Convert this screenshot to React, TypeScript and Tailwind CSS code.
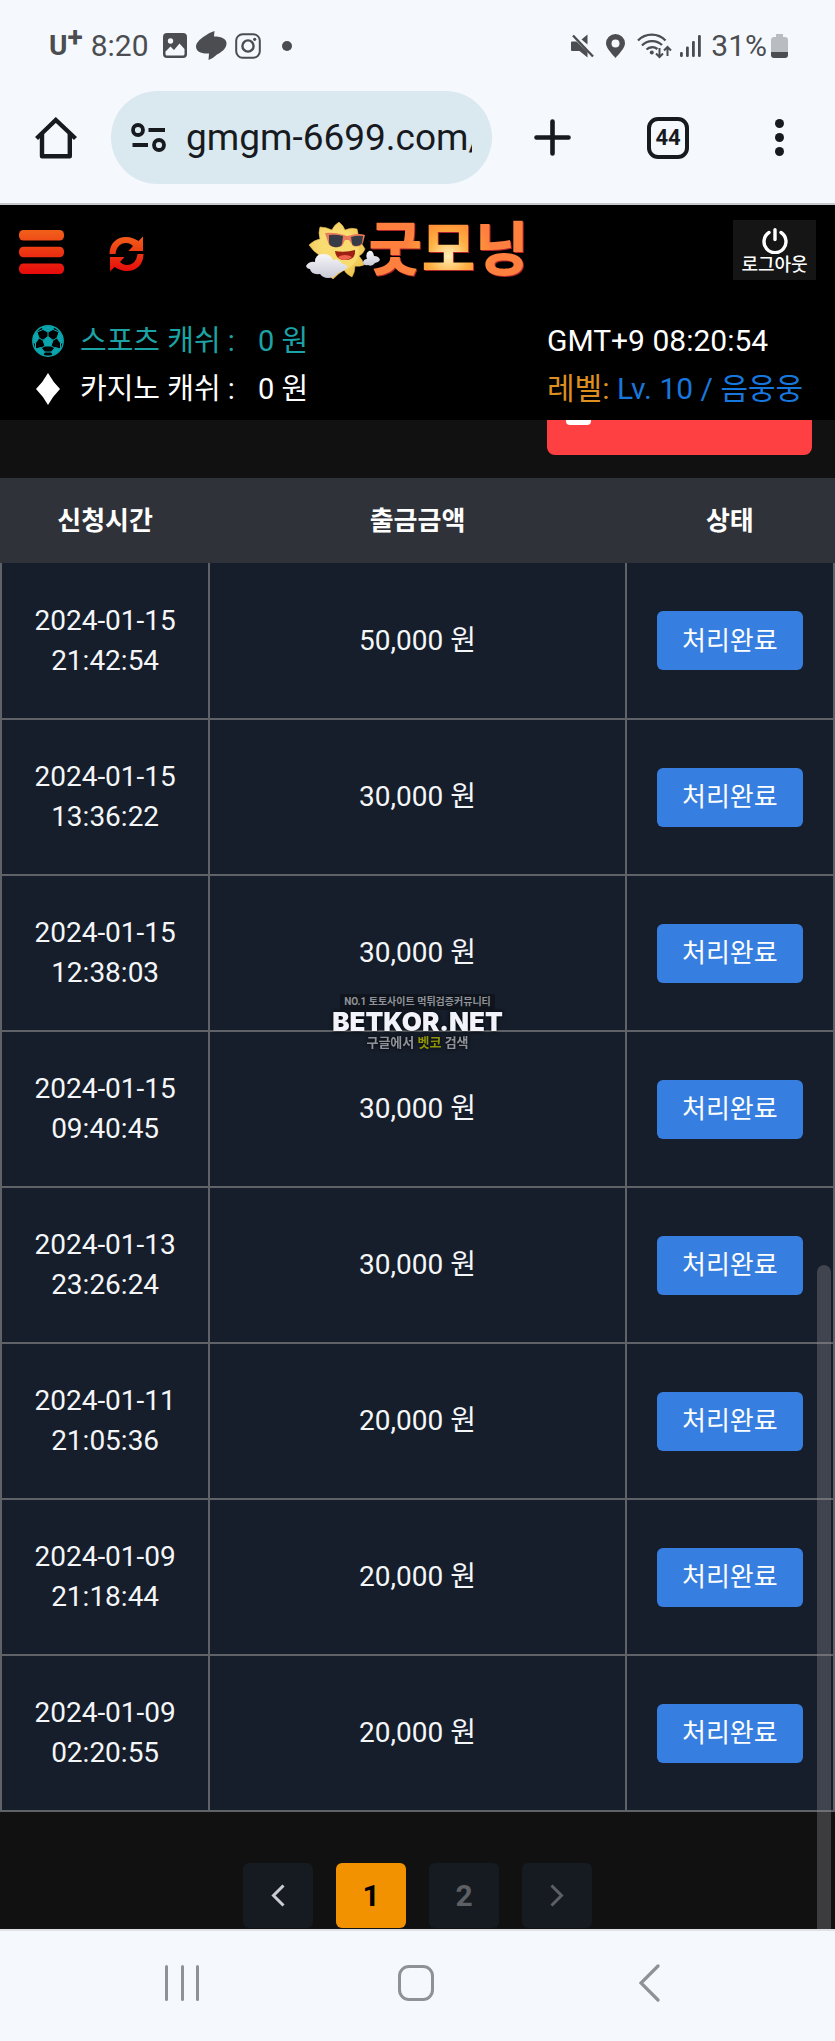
/**
 * @file App.tsx
 * @description
 * Mobile withdrawal history screen: phone status bar, browser toolbar,
 * site header with balances, the history table and its pagination.
 */

import React from 'react';

interface Withdrawal {
  date: string;
  time: string;
  amount: string;
}

const WITHDRAWALS: Withdrawal[] = [
  { date: '2024-01-15', time: '21:42:54', amount: '50,000' },
  { date: '2024-01-15', time: '13:36:22', amount: '30,000' },
  { date: '2024-01-15', time: '12:38:03', amount: '30,000' },
  { date: '2024-01-15', time: '09:40:45', amount: '30,000' },
  { date: '2024-01-13', time: '23:26:24', amount: '30,000' },
  { date: '2024-01-11', time: '21:05:36', amount: '20,000' },
  { date: '2024-01-09', time: '21:18:44', amount: '20,000' },
  { date: '2024-01-09', time: '02:20:55', amount: '20,000' },
];

const StatusBar: React.FC = () => (
  <div className="flex h-[91px] items-center justify-between pl-[49px] pr-[47px] text-[30px] leading-8 text-[#4b4d50]">
    <div className="flex items-center">
      <span className="flex items-center text-[28px] font-bold">
        U<span className="-mt-4">+</span>
      </span>
      <span className="ml-2">8:20</span>
      <svg className="ml-[14px] h-[25px] w-[24px]" viewBox="0 0 24 25" fill="none">
        <rect width="24" height="25" rx="4" fill="currentColor" />
        <circle cx="7.5" cy="8" r="2.7" fill="#f5f9fe" />
        <path d="M2.5 18.5 L7.5 13.5 L11 17 L16.5 10.5 L21.5 16 V21 Q21.5 22.5 20 22.5 H4 Q2.5 22.5 2.5 21 Z" fill="#f5f9fe" />
      </svg>
      <svg className="ml-[9px] h-[29px] w-[31px]" viewBox="0 0 31 29" fill="currentColor">
        <path d="M18.5 0 L18 5.5 C26 5.5 31 8 30.5 13 C30 18 25 21.5 21 23.5 Q17 27.5 12.5 29 L13 22.5 C5 23 0 20.5 0 15.5 C0 12 4 8 8 5.5 Q13 1.5 18.5 0 Z" />
      </svg>
      <svg className="ml-2 h-[26px] w-[26px]" viewBox="0 0 26 26" fill="none" stroke="currentColor">
        <rect x="1.2" y="1.2" width="23.6" height="23.6" rx="6.5" strokeWidth="2" />
        <circle cx="13" cy="13" r="5.6" strokeWidth="2.4" />
        <circle cx="19.7" cy="6.3" r="1.6" fill="currentColor" stroke="none" />
      </svg>
      <span className="ml-[21px] size-[10px] rounded-full bg-[#4b4d50]" />
    </div>
    <div className="flex items-center">
      <svg className="h-[24px] w-[23px]" viewBox="0 0 23 24" fill="currentColor">
        <path d="M0 8.5 Q0 7.5 1 7.5 H5.5 L16.5 18 V23.5 L8.5 17 H1 Q0 17 0 16 Z" />
        <path d="M16.5 0.5 V10.5 L10.5 5.5 Z" />
        <path d="M2 1.5 L22 22.5" stroke="currentColor" strokeWidth="2.4" />
      </svg>
      <svg className="ml-3 h-[24px] w-[19px]" viewBox="0 0 19 24" fill="currentColor" fillRule="evenodd">
        <path d="M9.5 0 A9.5 9.3 0 0 1 19 9.3 C19 14 13 20 9.5 24 C6 20 0 14 0 9.3 A9.5 9.3 0 0 1 9.5 0 Z M9.5 5.5 A4 4 0 1 0 9.5 13.5 A4 4 0 1 0 9.5 5.5 Z" />
      </svg>
      <svg className="ml-3 h-[27px] w-[35px]" viewBox="0 0 35 27" fill="none" stroke="currentColor" strokeWidth="2.3">
        <path d="M1 8.5 A19 19 0 0 1 28.5 8.5" />
        <path d="M5 13.5 A14 14 0 0 1 25 13" />
        <path d="M9.5 17.5 A8.5 8.5 0 0 1 20.5 17" />
        <circle cx="14.8" cy="20.5" r="2" fill="currentColor" stroke="none" />
        <path d="M22.5 16 V25 M19 21.5 L22.5 25 L26 21.5" strokeWidth="2" />
        <path d="M30.5 24 V15 M27 18.5 L30.5 15 L34 18.5" strokeWidth="2" />
      </svg>
      <svg className="ml-2 h-[22px] w-[21px]" viewBox="0 0 21 22" fill="currentColor">
        <rect y="17" width="2.8" height="5" rx="1.2" />
        <rect x="6" y="11.5" width="2.8" height="10.5" rx="1.2" />
        <rect x="12" y="6" width="2.8" height="16" rx="1.2" />
        <rect x="18" y="0" width="2.8" height="22" rx="1.2" />
      </svg>
      <span className="ml-[10px]">31%</span>
      <svg className="ml-1 h-[24px] w-[17px]" viewBox="0 0 17 24">
        <path d="M5 0 H12 V3 H14 Q17 3 17 6 V18 H0 V6 Q0 3 3 3 H5 Z" fill="#b9bcc0" />
        <path d="M0 18 H17 V21 Q17 24 14 24 H3 Q0 24 0 21 Z" fill="#4b4d50" />
      </svg>
    </div>
  </div>
);

const BrowserToolbar: React.FC = () => (
  <div className="flex items-center border-b-2 border-[#c6c9cc] pb-[19px] pl-[35px] pr-[51px] text-[#171a1e]">
    <button type="button" aria-label="홈">
      <svg className="size-[42px]" viewBox="0 0 42 42" fill="none" stroke="currentColor" strokeWidth="4.4" strokeLinejoin="round">
        <path d="M1.5 21.5 L20.8 3 L40.5 21.5" strokeLinejoin="miter" />
        <path d="M7 17 V39.3 H34.8 V17" />
      </svg>
    </button>
    <div className="ml-[34px] flex h-[93px] min-w-0 flex-1 items-center rounded-full bg-[#dae8f0] pl-5 pr-[20px]">
      <svg className="h-[29px] w-[35px] shrink-0" viewBox="0 0 35 29" fill="none" stroke="currentColor" strokeWidth="3.8">
        <circle cx="7" cy="7" r="5" />
        <path d="M17.5 7 H34 M1.5 22 H17" />
        <circle cx="28" cy="22" r="5" />
      </svg>
      <input
        type="text"
        aria-label="주소"
        className="ml-5 w-full min-w-0 flex-1 bg-transparent text-[37px] leading-[48px] outline-none"
        defaultValue="gmgm-6699.com/"
      />
    </div>
    <button type="button" aria-label="새 탭" className="ml-[42px]">
      <svg className="size-[37px]" viewBox="0 0 37 37" fill="none" stroke="currentColor" strokeWidth="4.6" strokeLinecap="round">
        <path d="M18.5 2.5 V34.5 M2.5 18.5 H34.5" />
      </svg>
    </button>
    <button
      type="button"
      className="ml-[76px] flex size-[42px] items-center justify-center rounded-[11px] border-4 border-[#171a1e] text-[22px] leading-6 font-bold"
    >
      44
    </button>
    <button type="button" aria-label="메뉴" className="ml-[86px] flex flex-col gap-[5px]">
      <span className="size-[9px] rounded-full bg-[#171a1e]" />
      <span className="size-[9px] rounded-full bg-[#171a1e]" />
      <span className="size-[9px] rounded-full bg-[#171a1e]" />
    </button>
  </div>
);

const SunMascot: React.FC = () => (
  <svg className="relative -mr-3 h-[57px] w-[74px]" viewBox="0 0 74 57">
    <defs>
      <radialGradient id="sun" cx="0.45" cy="0.4" r="0.6">
        <stop offset="0" stopColor="#ffe98a" />
        <stop offset="1" stopColor="#efc651" />
      </radialGradient>
      <linearGradient id="cloud" x1="0" y1="0" x2="0" y2="1">
        <stop offset="0" stopColor="#f6f6fa" />
        <stop offset="1" stopColor="#c9cad6" />
      </linearGradient>
    </defs>
    <path
      d="M33 0 Q37 3 39 8 Q45 5 51 7 Q53 12 51 16 Q55 20 59 27 Q57 32 53 34 Q57 38 58 43 Q53 45 49 44 Q49 50 46 55 Q40 52 38 48 Q33 51 27 57 Q22 54 20 48 Q14 48 9 45 Q11 38 13 33 Q7 29 3 23 Q8 18 14 17 Q12 11 14 5 Q20 5 26 8 Q28 3 33 0 Z"
      fill="url(#sun)"
      stroke="#e6bb4c"
      strokeWidth="0.6"
    />
    <ellipse cx="34" cy="28" rx="19" ry="20" fill="#f8dc70" />
    <path d="M19 11 Q28 10 38 13 Q41 14.5 44 13.5 Q52 11 59 13 L57 21 Q54 26 47 24 L43 18 H39 L36 24 Q29 27 23 23 Z" fill="#e8795a" />
    <path d="M23 13 Q30 12 37 14 L36 22 Q34 26 28 25 Q23 24 23 20 Z" fill="#353c46" />
    <path d="M45 15 Q51 13 57 14 L56 21 Q54 24 50 24 Q46 24 46 21 Z" fill="#353c46" />
    <path d="M29 29 Q39 31 49 28 Q50 38 39 38 Q30 38 29 29 Z" fill="#9e2014" />
    <path d="M32 35 Q39 31 46 35 Q43 38 39 38 Q34 38 32 35 Z" fill="#f0644f" />
    <path d="M0 44 Q3 39 9 40 Q9 32 17 32 Q25 32 27 38 Q33 36 36 42 Q42 42 41 46 Q37 50 32 51 Q28 56 22 56 Q17 56 14 52 Q5 53 4 47 Q1 47 0 44 Z" fill="url(#cloud)" />
    <path d="M57 40 Q58 37 61 37 Q59 31 63 29 Q67 28 68 34 Q73 34 74 38 Q72 41 69 41 Q66 45 62 43 Q57 44 57 40 Z" fill="url(#cloud)" />
  </svg>
);

const SoccerBall: React.FC = () => (
  <svg className="size-8" viewBox="0 0 32 32" fill="none" stroke="#0aa5ad">
    <clipPath id="ball">
      <circle cx="16" cy="16" r="15" />
    </clipPath>
    <g clipPath="url(#ball)" fill="#0aa5ad" strokeWidth="1">
      <path d="M16 11.5 L21 15.2 L19 21 H13 L11 15.2 Z" />
      <path d="M10 0 H22 L21 4.5 L16 7 L11 4.5 Z" />
      <path d="M0 8 L5 7 L7 13 L3.5 18 L0 18 Z" />
      <path d="M32 8 L27 7 L25 13 L28.5 18 L32 18 Z" />
      <path d="M3 24 L9 22.5 L12.5 27 L10 32 L3 32 Z" />
      <path d="M29 24 L23 22.5 L19.5 27 L22 32 L29 32 Z" />
      <path d="M16 7 V11.5 M11 15.2 L7 13 M21 15.2 L25 13 M13 21 L9 23 M19 21 L23 23 M11 4.5 L5 7 M21 4.5 L27 7 M3.5 18 V24 M28.5 18 V24 M12 27 H20" />
    </g>
    <circle cx="16" cy="16" r="15.2" strokeWidth="1.4" />
  </svg>
);

const SiteHeader: React.FC = () => (
  <header className="bg-black pt-[15px] pb-[7px]">
    <div className="grid grid-cols-[1fr_auto_1fr] items-center px-[19px]">
      <div className="flex items-center">
        <button type="button" aria-label="전체 메뉴">
          <svg className="mt-[3px] h-[44px] w-[45px]" viewBox="0 0 45 44" fill="url(#menuFill)">
            <defs>
              <linearGradient id="menuFill" x1="0" y1="0" x2="0" y2="44" gradientUnits="userSpaceOnUse">
                <stop offset="0" stopColor="#f2601a" />
                <stop offset="1" stopColor="#e60a0a" />
              </linearGradient>
            </defs>
            <rect width="45" height="10.5" rx="4.5" />
            <rect y="16.8" width="45" height="10.5" rx="4.5" />
            <rect y="33.5" width="45" height="10.5" rx="4.5" />
          </svg>
        </button>
        <button type="button" aria-label="새로고침" className="ml-[45px]">
          <svg className="mt-[7px] h-[36px] w-[35px]" viewBox="0 0 35 36" fill="url(#syncFill)">
            <defs>
              <linearGradient id="syncFill" x1="0" y1="0" x2="0" y2="36" gradientUnits="userSpaceOnUse">
                <stop offset="0" stopColor="#f2601a" />
                <stop offset="1" stopColor="#e60a0a" />
              </linearGradient>
            </defs>
            <path d="M0.5 18 C0.5 7 8 1 17 1 C22 1 26 2.7 29.5 5 L34 0.5 V15 H19.5 L24 10 C22 8 20 7 17 7 C11 7 7.5 11 6.5 18 Z" />
            <path d="M34.5 18 C34.5 29 27 35 18 35 C13 35 9 33.3 5.5 31 L1 35.5 V21 H15.5 L11 26 C13 28 15 29 18 29 C24 29 27.5 25 28.5 18 Z" />
          </svg>
        </button>
      </div>
      <a href="#" className="flex h-[60px] items-center">
        <SunMascot />
        <span className="bg-[radial-gradient(circle_at_50%_60%,#fff0b8_0,#ffb144_20px,#ff9a3a_30px,#ff7f3e_44px)] bg-clip-text text-[58px] leading-[60px] font-black text-transparent drop-shadow-[1px_1px_0_#b3242a]">
          굿모닝
        </span>
      </a>
      <button
        type="button"
        className="flex h-[60px] w-[83px] flex-col items-center justify-center justify-self-end bg-[#151515] text-[18px] leading-[22px] font-medium text-white"
      >
        <svg className="mt-1 h-[26px] w-[26px]" viewBox="0 0 26 26" fill="none" stroke="currentColor" strokeWidth="3.4" strokeLinecap="round">
          <path d="M13 1.8 V11.5" />
          <path d="M7 4.5 A11 11 0 1 0 19 4.5" />
        </svg>
        로그아웃
      </button>
    </div>
    <div className="mt-[37px] grid grid-cols-[1fr_288px] text-[30px] leading-[48px] text-white">
      <div className="flex items-center pl-8 text-[29px] text-[#1ca3a5]">
        <SoccerBall />
        <span className="ml-4 w-[178px]">스포츠 캐쉬 :</span>
        <span>0 원</span>
      </div>
      <div>GMT+9 08:20:54</div>
      <div className="flex items-center pl-8 text-[29px]">
        <svg className="size-8" viewBox="0 0 32 32" fill="currentColor">
          <path d="M16 0 Q21 9 28 16 Q21 23 16 32 Q11 23 4 16 Q11 9 16 0 Z" />
        </svg>
        <span className="ml-4 w-[178px]">카지노 캐쉬 :</span>
        <span>0 원</span>
      </div>
      <div className="whitespace-nowrap text-[#1877dc]">
        <span className="text-[#dd901f]">레벨:</span> Lv. 10 / 음웅웅
      </div>
    </div>
  </header>
);

const HistoryTable: React.FC = () => (
  <table className="w-full table-fixed border-collapse text-center text-[28px] leading-10 text-[#f4f6f8]">
    <thead>
      <tr className="h-[85px] bg-[#2f3339] text-[26px] text-white">
        <th className="w-1/4 border-x-2 border-[#2f3339]">신청시간</th>
        <th className="w-1/2 border-x-2 border-[#2f3339]">출금금액</th>
        <th className="w-1/4 border-x-2 border-[#2f3339]">상태</th>
      </tr>
    </thead>
    <tbody>
      {WITHDRAWALS.map((item) => (
        <tr key={item.date + item.time} className="h-[156px] bg-[#161e2b]">
          <td className="border-2 border-t-0 border-[#5f6266]">
            {item.date}
            <br />
            {item.time}
          </td>
          <td className="border-2 border-t-0 border-[#5f6266]">{item.amount} 원</td>
          <td className="border-2 border-t-0 border-[#5f6266]">
            <button type="button" className="h-[59px] rounded-md bg-[#367fe0] px-[25px] text-[26px] text-white">
              처리완료
            </button>
          </td>
        </tr>
      ))}
    </tbody>
  </table>
);

const Pagination: React.FC = () => (
  <nav className="mt-[51px] flex justify-center gap-[23px] pb-px text-[30px] leading-10 font-bold">
    <button type="button" aria-label="이전" className="flex h-[65px] w-[70px] items-center justify-center rounded-md bg-[#161b22] text-[#c9ccd4]">
      <svg className="h-[23px] w-[14px]" viewBox="0 0 14 23" fill="none" stroke="currentColor" strokeWidth="3">
        <path d="M12.5 1.5 L2.5 11.5 L12.5 21.5" />
      </svg>
    </button>
    <button type="button" className="h-[65px] w-[70px] rounded-md bg-[#f39200] text-black">1</button>
    <button type="button" className="h-[65px] w-[70px] rounded-md bg-[#161b22] text-[#5c5f63]">2</button>
    <button type="button" aria-label="다음" className="flex h-[65px] w-[70px] items-center justify-center rounded-md bg-[#161b22] text-[#5c5f63]">
      <svg className="h-[23px] w-[14px]" viewBox="0 0 14 23" fill="none" stroke="currentColor" strokeWidth="3">
        <path d="M1.5 1.5 L11.5 11.5 L1.5 21.5" />
      </svg>
    </button>
  </nav>
);

const Watermark: React.FC = () => (
  <div className="pointer-events-none absolute inset-0 flex flex-col items-center justify-center pt-1 whitespace-nowrap text-[#8f9399]">
    <span className="bg-[#10151d] px-1 text-[10px] leading-4 font-bold">NO.1 토토사이트 먹튀검증커뮤니티</span>
    <span className="font-[Inter] text-[26px] leading-6 font-black text-[#f1f2fa] drop-shadow-[0_0_2px_#000]">BETKOR.NET</span>
    <span className="text-[13px] leading-[18px] font-bold drop-shadow-[0_0_2px_#000]">
      구글에서 <span className="text-[#8f9408]">벳코</span> 검색
    </span>
  </div>
);

const SystemNav: React.FC = () => (
  <div className="grid h-[112px] grid-cols-[1fr_auto_1fr] items-center border-t-2 border-[#dfe2e5] bg-[#f5f9fe] pr-1 pb-[6px] text-[#8e9195]">
    <button type="button" aria-label="최근 앱" className="mr-[198px] justify-self-end">
      <svg className="h-[36px] w-[36px]" viewBox="0 0 36 36" fill="currentColor">
        <rect x="1" width="3" height="36" rx="1.5" />
        <rect x="17" width="3" height="36" rx="1.5" />
        <rect x="32" width="3" height="36" rx="1.5" />
      </svg>
    </button>
    <button type="button" aria-label="홈 화면" className="size-9 rounded-[11px] border-3 border-[#8e9195]" />
    <button type="button" aria-label="뒤로" className="ml-[205px] justify-self-start">
      <svg className="h-[38px] w-[21px]" viewBox="0 0 21 38" fill="none" stroke="currentColor" strokeWidth="3.2" strokeLinecap="round">
        <path d="M19 2 L2 19 L19 36" />
      </svg>
    </button>
  </div>
);

const App: React.FC = () => (
  <div className="relative flex min-h-screen flex-col bg-[#f5f9fe] font-[Roboto,'Noto_Sans_CJK_KR',sans-serif]">
    <StatusBar />
    <BrowserToolbar />
    <SiteHeader />
    <main className="relative flex-1 bg-[#111111]">
      <div className="flex justify-end pr-[23px] pb-[23px]">
        <button type="button" aria-label="삭제" className="flex h-[35px] w-[265px] items-start rounded-b-lg bg-[#ff4043] pl-[19px]">
          <span className="h-[5px] w-[25px] rounded-b-sm bg-white" />
        </button>
      </div>
      <HistoryTable />
      <Pagination />
      {/* Scroll indicator */}
      <div className="absolute right-1 bottom-0 h-[44%] w-[14px] rounded-t-full bg-[#8d8d92]/35" />
    </main>
    <SystemNav />
    <Watermark />
  </div>
);

export default App;
